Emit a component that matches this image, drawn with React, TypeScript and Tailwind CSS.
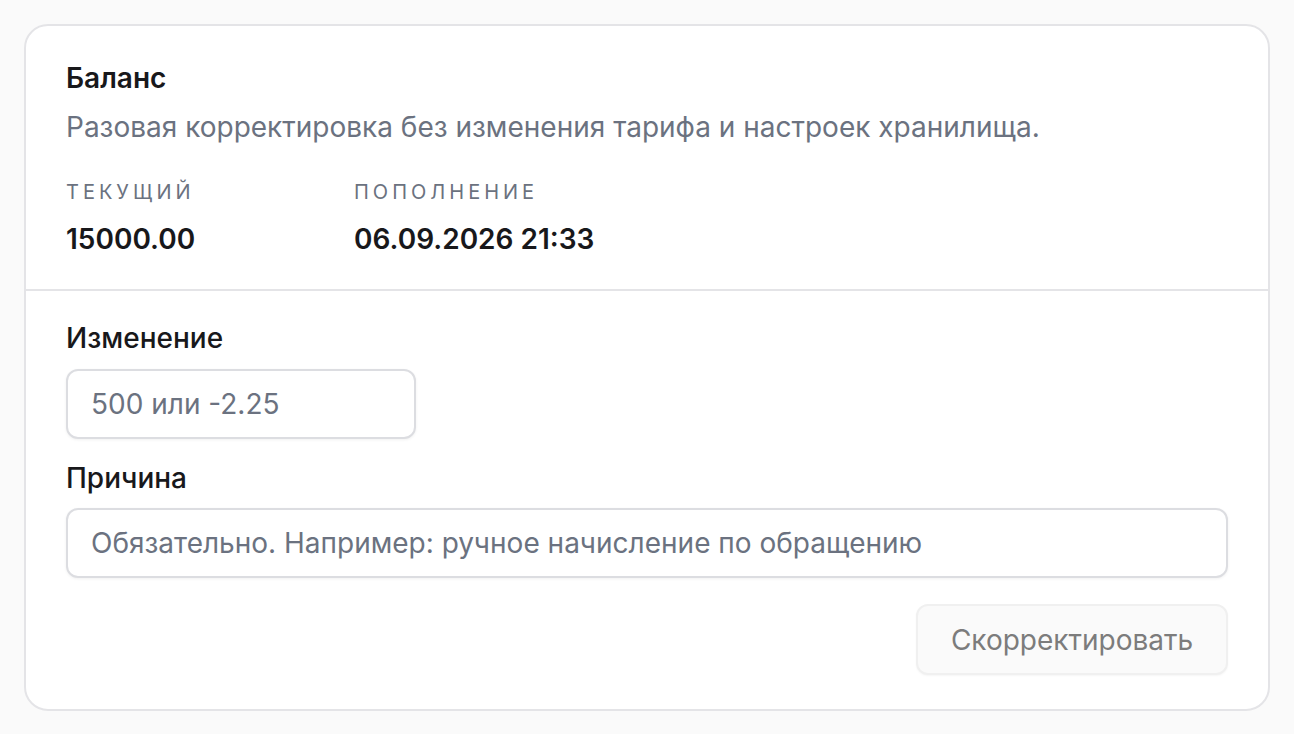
import React from "react";

export default function App() {
  return (
    <div
      className="min-h-screen bg-[#fafafa] p-[24px]"
      style={{ fontFamily: "Inter, 'Noto Sans', sans-serif" }}
    >
      <div className="rounded-[24px] border-2 border-[#e4e4e7] bg-white">
        <div className="px-[40px] pt-[32px] pb-[30px] border-b-2 border-[#e4e4e7]">
          <div className="text-[28px] leading-[40px] font-semibold text-[#18181b]">Баланс</div>
          <div className="mt-[9px] text-[28px] leading-[40px] text-[#6b7280]">
            Разовая корректировка без изменения тарифа и настроек хранилища.
          </div>
          <div className="mt-[29px] grid grid-cols-[288px_auto]">
            <div className="flex flex-col">
              <div className="text-[20px] leading-[32px] uppercase tracking-[0.2em] text-[#6b7280]">Текущий</div>
              <div className="mt-[11px] text-[28px] leading-[40px] font-semibold text-[#18181b]">15000.00</div>
            </div>
            <div className="flex flex-col">
              <div className="text-[20px] leading-[32px] uppercase tracking-[0.2em] text-[#6b7280]">Пополнение</div>
              <div className="mt-[11px] text-[28px] leading-[40px] font-semibold text-[#18181b]">06.09.2026 21:33</div>
            </div>
          </div>
        </div>
        <div className="px-[40px] pt-[27px] pb-[34px] flex flex-col">
          <label className="text-[28px] leading-[40px] font-medium text-[#18181b]">Изменение</label>
          <input
            className="mt-[11px] w-[350px] h-[70px] rounded-[12px] border-2 border-[#dcdde1] bg-white px-[23px] text-[28px] text-[#18181b] placeholder:text-[#6b7280] shadow-[0_1px_3px_rgba(0,0,0,0.06)] outline-none"
            placeholder="500 или -2.25"
          />
          <label className="mt-[19px] text-[28px] leading-[40px] font-medium text-[#18181b]">Причина</label>
          <input
            className="mt-[10px] w-full h-[70px] rounded-[12px] border-2 border-[#dcdde1] bg-white px-[23px] text-[28px] text-[#18181b] placeholder:text-[#6b7280] shadow-[0_1px_3px_rgba(0,0,0,0.06)] outline-none"
            placeholder="Обязательно. Например: ручное начисление по обращению"
          />
          <div className="mt-[26px] flex justify-end">
            <button className="h-[71px] w-[312px] rounded-[12px] border-2 border-[#f0f0f0] bg-[#fafafa] text-[28px] text-[#7c7c7c] shadow-[0_1px_2px_rgba(0,0,0,0.04)]">
              Скорректировать
            </button>
          </div>
        </div>
      </div>
    </div>
  );
}
